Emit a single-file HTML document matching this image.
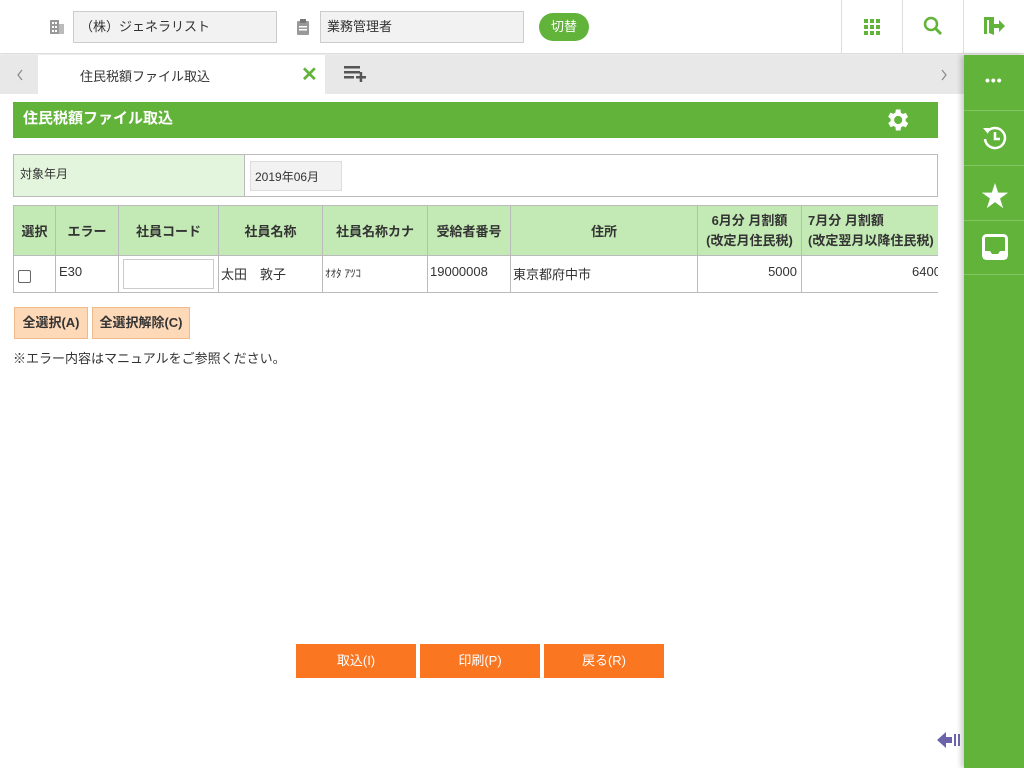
<!DOCTYPE html>
<html><head><meta charset="utf-8"><style>
*{box-sizing:border-box;margin:0;padding:0}
body{width:1024px;height:768px;position:relative;overflow:hidden;background:#fff;font-family:"Liberation Sans","Noto Sans CJK JP",sans-serif;font-size:13px;color:#333}
.abs{position:absolute}
.hdr{left:0;top:0;width:1024px;height:54px;border-bottom:1px solid #ddd;box-shadow:0 1px 3px rgba(0,0,0,.12)}
.inp{background:#f2f2f2;border:1px solid #ccc;height:32px;top:11px;line-height:30px;padding-left:6px;font-size:13px}
.vl{top:0;width:1px;height:54px;background:#ddd}
.tabs{left:0;top:55px;width:964px;height:39px;background:#e8e8e8}
.side{left:964px;top:55px;width:60px;height:713px;background:#62b33a;box-shadow:-3px 0 5px rgba(0,0,0,.2)}
.sl{left:0;width:60px;height:1px;background:#84c564}
table{border-collapse:collapse}
td,th{border:1px solid #bbb}
th{background:#c3e9b4;font-weight:bold;font-size:13px;color:#333}
.btn{background:#fdd9b8;border:1px solid #f0b98a;height:32px;top:307px;line-height:30px;text-align:center;font-weight:bold;font-size:13px}
.ob{top:644px;width:120px;height:34px;background:#fa7620;color:#fff;text-align:center;line-height:34px;font-size:13px}
</style></head><body>
<div class="abs hdr"></div>
<svg class="abs" style="left:49px;top:19px" width="16" height="16"><rect x="1" y="1" width="9" height="14" fill="#999"/><rect x="10" y="5" width="5" height="10" fill="#bbb"/><g fill="#fff"><rect x="3" y="3" width="2" height="2"/><rect x="6" y="3" width="2" height="2"/><rect x="3" y="7" width="2" height="2"/><rect x="6" y="7" width="2" height="2"/><rect x="3" y="11" width="2" height="2"/><rect x="6" y="11" width="2" height="2"/></g></svg>
<div class="abs inp" style="left:73px;width:204px">（株）ジェネラリスト</div>
<svg class="abs" style="left:296px;top:19px" width="14" height="16"><rect x="1" y="2" width="12" height="14" rx="1" fill="#999"/><rect x="4" y="0" width="6" height="4" fill="#777"/><rect x="3" y="7" width="8" height="1.5" fill="#fff"/><rect x="3" y="10" width="8" height="1.5" fill="#fff"/></svg>
<div class="abs inp" style="left:320px;width:204px">業務管理者</div>
<div class="abs" style="left:539px;top:13px;width:50px;height:28px;border-radius:14px;background:#62b33a;color:#fff;text-align:center;line-height:28px;font-size:13px">切替</div>
<div class="abs vl" style="left:841px"></div><div class="abs vl" style="left:902px"></div><div class="abs vl" style="left:963px"></div>
<svg class="abs" style="left:864px;top:19px" width="16" height="16" fill="#62b33a"><rect x="0" y="0" width="4" height="4"/><rect x="6" y="0" width="4" height="4"/><rect x="12" y="0" width="4" height="4"/><rect x="0" y="6" width="4" height="4"/><rect x="6" y="6" width="4" height="4"/><rect x="12" y="6" width="4" height="4"/><rect x="0" y="12" width="4" height="4"/><rect x="6" y="12" width="4" height="4"/><rect x="12" y="12" width="4" height="4"/></svg>
<svg class="abs" style="left:923px;top:16px" width="20" height="20"><circle cx="8" cy="8" r="6" fill="none" stroke="#62b33a" stroke-width="2.5"/><path d="M12 12l6 6" stroke="#62b33a" stroke-width="3"/></svg>
<svg class="abs" style="left:983px;top:16px" width="22" height="20" fill="#62b33a"><path d="M1 1h10v18l-5-2V4H1z"/><rect x="1" y="1" width="3" height="17"/><path d="M11 8h5V4l6 6-6 6v-4h-5z"/></svg>
<div class="abs tabs"></div>
<svg class="abs" style="left:16px;top:69px" width="8" height="12"><path d="M6 1L2 6l4 5" fill="none" stroke="#888" stroke-width="1.2"/></svg>
<svg class="abs" style="left:940px;top:69px" width="8" height="12"><path d="M2 1l4 5-4 5" fill="none" stroke="#888" stroke-width="1.2"/></svg>
<div class="abs" style="left:38px;top:55px;width:287px;height:39px;background:#fff"></div>
<div class="abs" style="left:80px;top:66px;font-size:13px">住民税額ファイル取込</div>
<div class="abs" style="left:301px;top:62px;color:#62b33a;font-size:20px;font-weight:bold">✕</div>
<svg class="abs" style="left:344px;top:66px" width="24" height="16" fill="#555"><rect x="0" y="0" width="16" height="2.5"/><rect x="0" y="5" width="16" height="2.5"/><rect x="0" y="10" width="10" height="2.5"/><rect x="12" y="10" width="10" height="2.5"/><rect x="15.7" y="6" width="2.5" height="10"/></svg>
<div class="abs side"></div>
<div class="abs sl" style="left:964px;top:110px"></div><div class="abs sl" style="left:964px;top:165px"></div><div class="abs sl" style="left:964px;top:220px"></div><div class="abs sl" style="left:964px;top:274px"></div>
<div class="abs" style="left:985px;top:72px;color:#fff;font-size:14px;font-weight:bold;letter-spacing:1px">•••</div>
<svg class="abs" style="left:980px;top:123px" width="30" height="30"><path d="M7 9A10 10 0 1 1 5 16" fill="none" stroke="#fff" stroke-width="2.5"/><path d="M3 5l6 0-1 6z" fill="#fff"/><path d="M15 9v7h5" fill="none" stroke="#fff" stroke-width="2.5"/></svg>
<div class="abs" style="left:981px;top:175px;color:#fff;font-size:28px">★</div>
<svg class="abs" style="left:982px;top:234px" width="26" height="26"><rect x="1.5" y="1.5" width="23" height="23" rx="3" fill="none" stroke="#fff" stroke-width="3"/><path d="M1 17h7l2 3h6l2-3h7v8H1z" fill="#fff"/></svg>
<svg class="abs" style="left:937px;top:730px" width="26" height="20"><path d="M0 10l9-8v5h6v6H9v5z" fill="#6b64a8"/><rect x="17" y="4" width="2" height="12" fill="#6b64a8"/><rect x="21" y="4" width="2" height="12" fill="#6b64a8"/></svg>
<div class="abs" style="left:13px;top:102px;width:925px;height:36px;background:#62b33a;color:#fff;font-weight:bold;font-size:15px;line-height:34px;padding-left:10px">住民税額ファイル取込</div>
<svg class="abs" style="left:883px;top:106px" width="28" height="28" viewBox="0 0 24 24"><path fill="#fff" d="M19.4 13a7.6 7.6 0 0 0 0-2l2.1-1.6-2-3.5-2.5 1a7 7 0 0 0-1.7-1L15 3h-4l-.4 2.7a7 7 0 0 0-1.7 1l-2.5-1-2 3.5L6.6 11a7.6 7.6 0 0 0 0 2l-2.1 1.6 2 3.5 2.5-1a7 7 0 0 0 1.7 1L11 21h4l.4-2.7a7 7 0 0 0 1.7-1l2.5 1 2-3.5zM13 15.5a3.5 3.5 0 1 1 0-7 3.5 3.5 0 0 1 0 7z"/></svg>
<table class="abs" style="left:13px;top:154px;width:925px;height:43px"><tr><td style="width:231px;background:#e3f5dc;vertical-align:top;padding:10px 6px;font-size:12px">対象年月</td><td><div style="margin-left:5px;width:92px;height:30px;background:#f2f2f2;border:1px solid #ddd;line-height:30px;padding-left:4px;font-size:12px">2019年06月</div></td></tr></table>
<div class="abs" style="left:13px;top:205px;width:925px;overflow:hidden">
<table style="width:960px;table-layout:fixed">
<colgroup><col style="width:42px"><col style="width:63px"><col style="width:100px"><col style="width:104px"><col style="width:105px"><col style="width:83px"><col style="width:187px"><col style="width:104px"><col style="width:172px"></colgroup>
<tr style="height:50px"><th>選択</th><th>エラー</th><th>社員コード</th><th>社員名称</th><th>社員名称カナ</th><th>受給者番号</th><th>住所</th><th style="line-height:20px">6月分 月割額<br>(改定月住民税)</th><th style="line-height:20px;text-align:left;padding-left:6px">7月分 月割額<br>(改定翌月以降住民税)</th></tr>
<tr style="height:37px;font-size:13px"><td style="padding-left:4px"><div style="width:13px;height:13px;border:1px solid #666;border-radius:2px;margin-top:4px"></div></td><td style="padding-left:3px;vertical-align:top;padding-top:8px">E30</td><td style="padding:3px 4px"><div style="height:30px;border:1px solid #ccc"></div></td><td style="padding-left:2px;vertical-align:top;padding-top:8px">太田　敦子</td><td style="padding-left:2px;font-size:11px;vertical-align:top;padding-top:9px">ｵｵﾀ ｱﾂｺ</td><td style="padding-left:2px;vertical-align:top;padding-top:8px">19000008</td><td style="padding-left:2px;vertical-align:top;padding-top:8px">東京都府中市</td><td style="text-align:right;padding-right:4px;vertical-align:top;padding-top:8px">5000</td><td style="padding-left:110px;vertical-align:top;padding-top:8px">6400</td></tr>
</table></div>
<div class="abs btn" style="left:14px;width:74px">全選択(A)</div>
<div class="abs btn" style="left:92px;width:98px">全選択解除(C)</div>
<div class="abs" style="left:13px;top:348px;font-size:13px">※エラー内容はマニュアルをご参照ください。</div>
<div class="abs ob" style="left:296px">取込(I)</div>
<div class="abs ob" style="left:420px">印刷(P)</div>
<div class="abs ob" style="left:544px">戻る(R)</div>
</body></html>
